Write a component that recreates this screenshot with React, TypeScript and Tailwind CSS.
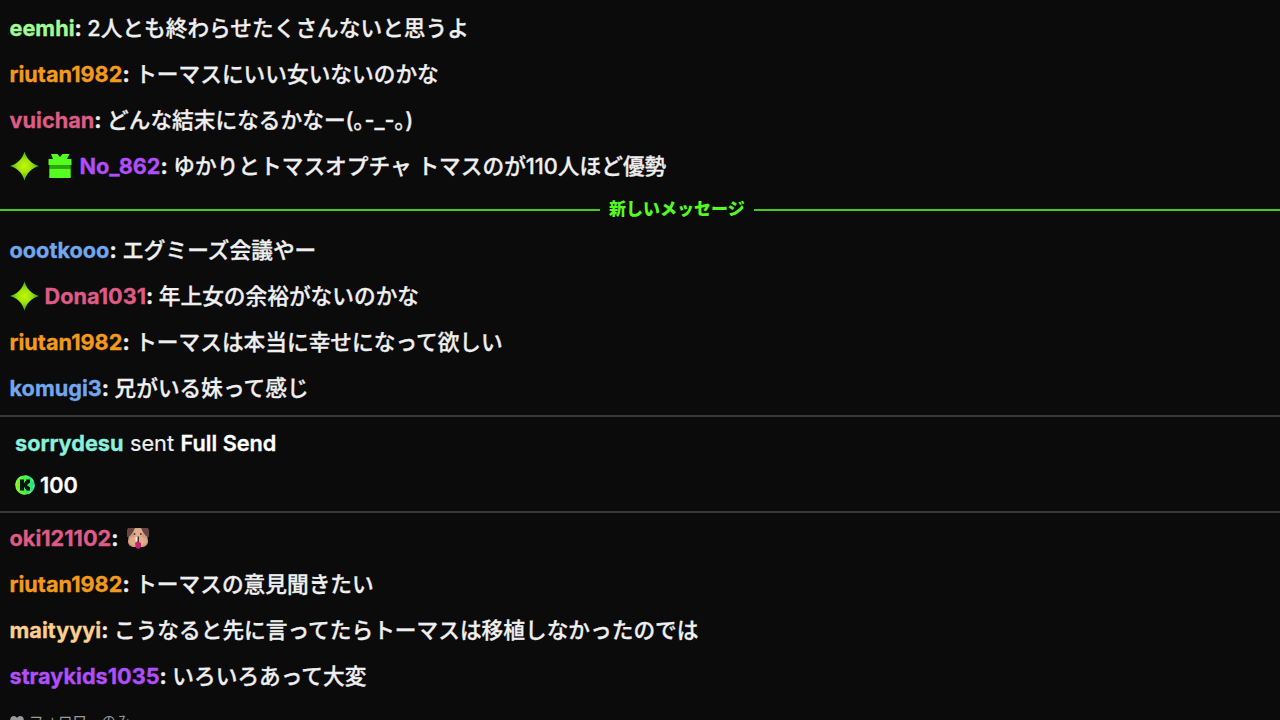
import type { ReactNode } from "react";

type Message = {
  name: string;
  color: string;
  badges?: ReactNode;
  text: ReactNode;
};

function SparkBadge() {
  return (
    <svg className="mr-[6px] h-[30px] w-[29px] shrink-0" viewBox="0 0 29 30">
      <defs>
        <radialGradient id="spark">
          <stop offset="0" stopColor="#c4f500" />
          <stop offset="0.45" stopColor="#a0e60a" />
          <stop offset="1" stopColor="#35a81c" />
        </radialGradient>
      </defs>
      <path
        fill="url(#spark)"
        d="M14.5 0.5C16.8 8 21 12.3 29 15C21 17.7 16.8 22 14.5 29.5C12.2 22 8 17.7 0 15C8 12.3 12.2 8 14.5 0.5Z"
      />
    </svg>
  );
}

function GiftBadge() {
  return (
    <svg
      className="mr-[8px] ml-[3px] h-[26px] w-[24px] shrink-0"
      viewBox="0 0 24 26"
    >
      <path
        fill="#55fc1f"
        d="M3 1H9.5L12 4L14.5 1H21.5L19 6H23.5V12H0.5V6H5Z"
      />
      <path fill="#28a80d" d="M1.3 12H22.7V15.5H1.3Z" />
      <path fill="#55fc1f" d="M1.3 15.5H22.7V25H1.3Z" />
    </svg>
  );
}

function KickCoin() {
  return (
    <svg className="mr-[5px] h-5 w-5" viewBox="0 0 20 20">
      <defs>
        <linearGradient id="coin" x1="0" x2="1">
          <stop offset="0" stopColor="#8df72d" />
          <stop offset="0.5" stopColor="#3df04a" />
          <stop offset="1" stopColor="#20dfa0" />
        </linearGradient>
      </defs>
      <circle cx="10" cy="10" r="9.8" fill="url(#coin)" />
      <circle
        cx="10"
        cy="10"
        r="9"
        fill="none"
        stroke="#a6f54a"
        strokeWidth="1"
        strokeDasharray="3 4"
      />
      <path
        fill="#07150b"
        d="M5 4.5H9V7.5H10V6H11.2V4.5H15V8H13.7V9H12.5V11H13.7V12H15V15.5H11.2V14H10V12.5H9V15.5H5Z"
      />
    </svg>
  );
}

function DogEmote() {
  return (
    <svg className="ml-[3px] h-[22px] w-[22px]" viewBox="0 0 22 22">
      <path
        fill="#d09b7b"
        d="M4 1H18L20 7L21 14C21 18 18 20 14.5 20H7.5C4 20 1 18 1 14L2 7Z"
      />
      <path fill="#684445" d="M1 1H8L6 5L3 9L0 10V3Z" />
      <path fill="#684445" d="M14 1H21L22 3V10L19 9L16 5Z" />
      <path fill="#dfae8c" d="M8 1.5H14L16 7L13 11H9L6 7Z" />
      <circle cx="7.5" cy="7" r="1" fill="#56362f" />
      <circle cx="13.8" cy="7" r="1" fill="#56362f" />
      <ellipse cx="7" cy="14" rx="4.6" ry="4" fill="#e0ab8b" />
      <ellipse cx="15" cy="14" rx="4.6" ry="4" fill="#e0ab8b" />
      <path fill="#fff0e4" d="M8.5 10H12V14H8.5Z" />
      <path fill="#4b2730" d="M10.5 9.5H12V16H10.5Z" />
      <path
        fill="#c91f70"
        d="M8 16L11 14.5L14 16V19C14 22.5 8.5 22.5 8.5 19Z"
      />
    </svg>
  );
}

const before: Message[] = [
  {
    name: "eemhi",
    color: "text-[#a1fb93]",
    text: "2人とも終わらせたくさんないと思うよ",
  },
  {
    name: "riutan1982",
    color: "text-[#f29a1a]",
    text: "トーマスにいい女いないのかな",
  },
  {
    name: "vuichan",
    color: "text-[#df5b86]",
    text: "どんな結末になるかなー(｡-_-｡)",
  },
  {
    name: "No_862",
    color: "text-[#b04efa]",
    badges: (
      <>
        <SparkBadge />
        <GiftBadge />
      </>
    ),
    text: "ゆかりとトマスオプチャ トマスのが110人ほど優勢",
  },
];

const fresh: Message[] = [
  {
    name: "oootkooo",
    color: "text-[#72a7ee]",
    text: "エグミーズ会議やー",
  },
  {
    name: "Dona1031",
    color: "text-[#df5b86]",
    badges: <SparkBadge />,
    text: "年上女の余裕がないのかな",
  },
  {
    name: "riutan1982",
    color: "text-[#f29a1a]",
    text: "トーマスは本当に幸せになって欲しい",
  },
  {
    name: "komugi3",
    color: "text-[#72a7ee]",
    text: "兄がいる妹って感じ",
  },
];

const latest: Message[] = [
  { name: "oki121102", color: "text-[#df5b86]", text: <DogEmote /> },
  {
    name: "riutan1982",
    color: "text-[#f29a1a]",
    text: "トーマスの意見聞きたい",
  },
  {
    name: "maityyyi",
    color: "text-[#fbd08c]",
    text: "こうなると先に言ってたらトーマスは移植しなかったのでは",
  },
  {
    name: "straykids1035",
    color: "text-[#b04efa]",
    text: "いろいろあって大変",
  },
];

function MessageList({ messages }: { messages: Message[] }) {
  return (
    <ul>
      {messages.map((m) => (
        <li
          key={m.name}
          className="flex h-[46px] items-center px-[9.5px] whitespace-nowrap"
        >
          {m.badges}
          <span
            className={`font-bold [-webkit-text-stroke:0.3px_currentColor] ${m.color}`}
          >
            {m.name}
          </span>
          <span className="mr-[5.5px] font-bold [-webkit-text-stroke:0.3px_currentColor]">
            :
          </span>
          <span className="font-medium [-webkit-text-stroke:0.3px_currentColor]">
            {m.text}
          </span>
        </li>
      ))}
    </ul>
  );
}

export default function App() {
  return (
    <main className="flex h-screen flex-col overflow-hidden bg-[#0b0b0b] pt-[5px] font-['Inter','Noto_Sans_CJK_JP',sans-serif] text-[21.7px] leading-[30px] text-[#efefef]">
      <MessageList messages={before} />

      <div className="flex h-[38px] shrink-0 items-center gap-[9px] pt-[2px]">
        <div className="mt-px h-[2px] w-[600px] bg-[#43c91f]" />
        <span className="text-[17px] font-black whitespace-nowrap text-[#55fc1f]">
          新しいメッセージ
        </span>
        <div className="mt-px h-[2px] flex-1 bg-[#43c91f]" />
      </div>

      <MessageList messages={fresh} />

      <section className="mt-[4px] h-[98px] shrink-0 border-y-2 border-[#38383a] px-[15px] pt-[6px]">
        <p className="flex h-[40px] items-center gap-[6.5px]">
          <span className="font-bold text-[#8af0dc] [-webkit-text-stroke:0.3px_currentColor]">
            sorrydesu
          </span>
          <span className="[-webkit-text-stroke:0.2px_currentColor]">sent</span>
          <span className="font-semibold text-white [-webkit-text-stroke:0.3px_currentColor]">
            Full Send
          </span>
        </p>
        <p className="flex h-[44px] items-center font-semibold text-white [-webkit-text-stroke:0.3px_currentColor]">
          <span className="[-webkit-text-stroke:0]">
            <KickCoin />
          </span>
          100
        </p>
      </section>

      <div className="mt-[2px]">
        <MessageList messages={latest} />
      </div>

      <footer className="mt-[11px] flex h-6 shrink-0 items-center gap-[5px] px-[10px] text-[14.5px] text-[#9a9a9c]">
        <svg className="h-[14px] w-[14px]" viewBox="0 0 14 14">
          <path
            fill="currentColor"
            d="M7 13L1 7C-1 4 1 1 4 1C5.5 1 6.5 2 7 3C7.5 2 8.5 1 10 1C13 1 15 4 13 7Z"
          />
        </svg>
        <span className="whitespace-nowrap">フォロワーのみ</span>
      </footer>
    </main>
  );
}
